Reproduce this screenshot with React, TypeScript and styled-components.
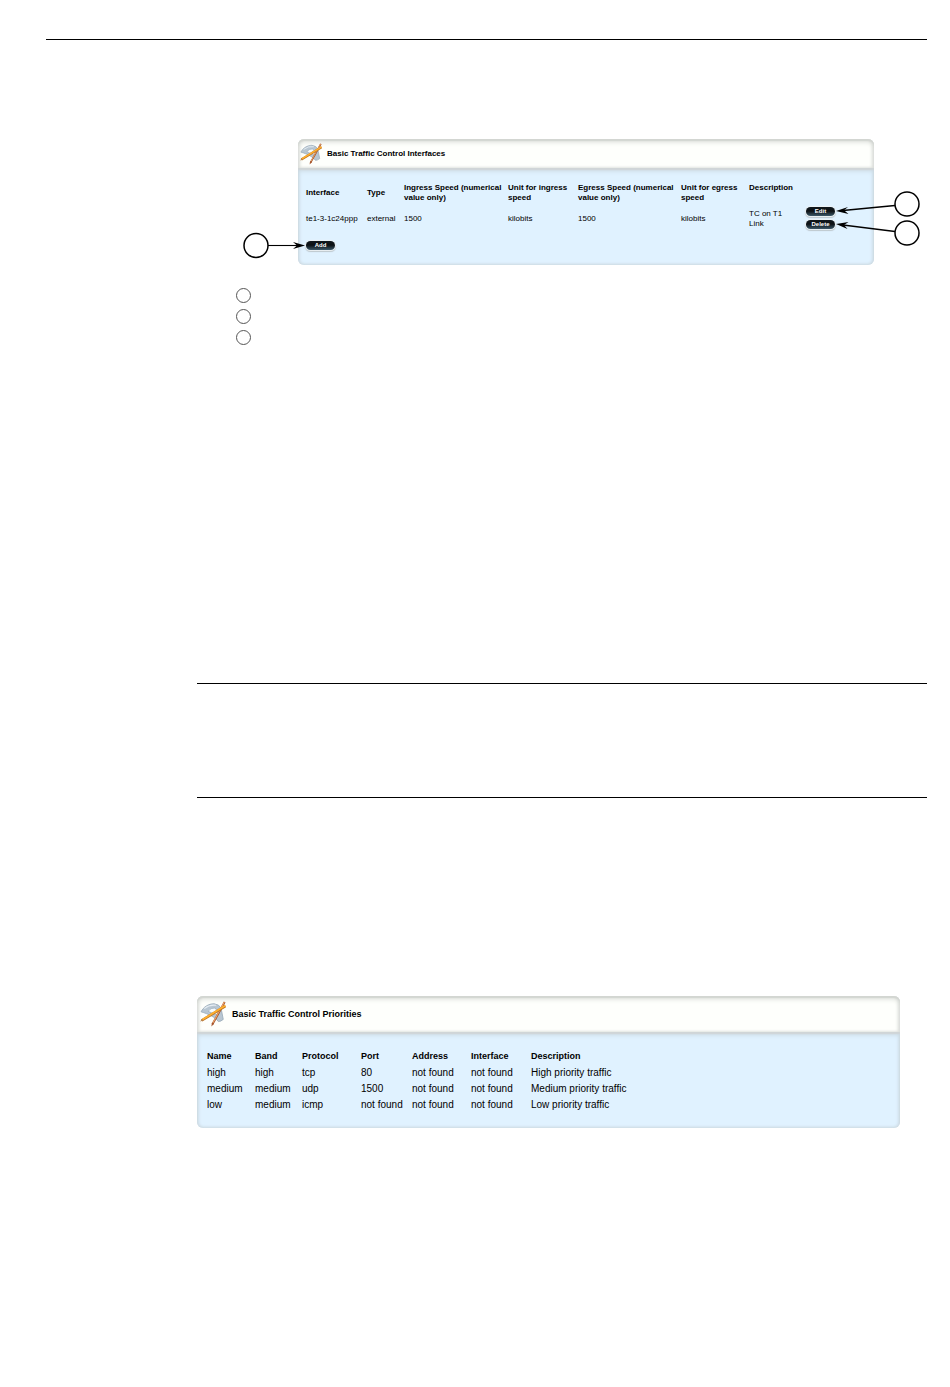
import React from "react";
import styled, { createGlobalStyle } from "styled-components";

const GlobalStyle = createGlobalStyle`
  * { box-sizing: border-box; }
  body {
    margin: 0;
    background: #fff;
    color: #000;
    font-family: "Liberation Sans", Arial, sans-serif;
  }
`;

type Size = "small" | "large";

const Page = styled.main`
  padding: 39px 23px 259px 46px;
`;

const Rule = styled.hr`
  margin: 0;
  border: 0;
  border-top: 1px solid #000;
`;

const Content = styled.section`
  margin-left: 151px;
`;

const Figure = styled.figure`
  margin: 99px 53px 23px 101px;
`;

const KeyList = styled.ol`
  list-style: none;
  margin: 0 0 338px 39px;
  padding: 0;
  display: flex;
  flex-direction: column;
  gap: 6px;
`;

const KeyItem = styled.li`
  width: 15px;
  height: 15px;
  border: 1px solid #555;
  border-radius: 50%;
`;

const Note = styled.div`
  height: 115px;
  margin-bottom: 198px;
  border: solid #000;
  border-width: 1px 0;
`;

const Wide = styled.div`
  margin-right: 27px;
`;

const PanelBox = styled.article`
  border-radius: 6px;
  background: #e0f2ff;
`;

const PanelHeader = styled.header<{ $size: Size }>`
  display: flex;
  align-items: center;
  gap: ${(p) => (p.$size === "small" ? 5 : 6)}px;
  height: ${(p) => (p.$size === "small" ? 29 : 36)}px;
  padding-left: ${(p) => (p.$size === "small" ? 2 : 3)}px;
  border-radius: 6px 6px 0 0;
  background: #fefffc;
  box-shadow: inset 0 2px 1px #d3d6d2, inset 0 3px 5px #d9dcd8, inset 2px 0 3px #e0e3df, inset -2px 0 3px #e0e3df;
`;

const PanelTitle = styled.h2<{ $size: Size }>`
  margin: 0;
  font-size: ${(p) => (p.$size === "small" ? 8 : 9)}px;
  line-height: 12px;
  font-weight: 700;
`;

const PanelBody = styled.div<{ $size: Size }>`
  padding: ${(p) => (p.$size === "small" ? "15px 8px" : "14px 10px 15px")};
  border-radius: 0 0 6px 6px;
  box-shadow: inset 0 2px 1px #d0d5d7, inset 0 3px 5px #cbd9e2, inset 0 0 3px 1px #cdd9e0;
`;

const Table = styled.table<{ $size: Size }>`
  width: 100%;
  table-layout: fixed;
  border-collapse: collapse;
  font-size: ${(p) => (p.$size === "small" ? 8 : 10)}px;
  line-height: 10px;
`;

const HeadCell = styled.th<{ $top?: boolean; $size: Size }>`
  padding: 0;
  font-size: ${(p) => (p.$size === "small" ? 8 : 9)}px;
  text-align: left;
  vertical-align: ${(p) => (p.$top ? "top" : "middle")};
`;

const Cell = styled.td<{ $narrow?: boolean }>`
  padding: 0 ${(p) => (p.$narrow ? 12 : 0)}px 0 0;
  vertical-align: middle;
`;

const Row = styled.tr<{ $height: number }>`
  height: ${(p) => p.$height}px;
`;

const Actions = styled.div`
  display: flex;
  flex-direction: column;
  gap: 4px;
  padding-bottom: 2px;
`;

const AddArea = styled.div`
  padding-top: 6px;
`;

const ButtonSlot = styled.div`
  position: relative;
  width: 29px;
  height: 9px;
`;

const PillButton = styled.button`
  display: block;
  width: 100%;
  height: 9px;
  padding: 0;
  border: 0;
  border-radius: 5px;
  background: linear-gradient(#11181d, #0c1013 45%, #3c5868);
  box-shadow: 0 0 1px 1px #eef3f5, 0 1px 1px 1px #b9c4ca;
  color: #fff;
  font: 700 6px/9px "Liberation Sans", Arial, sans-serif;
  text-align: center;
`;

const Callout = styled.svg<{ $side: "left" | "up" | "down" }>`
  position: absolute;
  top: ${(p) => ({ left: -9, up: -18, down: -1 })[p.$side]}px;
  ${(p) => (p.$side === "left" ? "right: 29px" : "left: 29px")};
  pointer-events: none;
`;

const ToolsIcon = ({ size }: { size: number }) => (
  <svg width={size} height={size} viewBox="0 0 24 24" aria-hidden="true">
    <path
      d="M1 10C3 5.500 8 2.500 13 2.500Q18 3 19.500 7L21.500 17Q19 19 17 19C14 15 8 12 1 10Z"
      fill="#b8c6d2"
      stroke="#94a6b5"
      strokeWidth=".7"
    />
    <path d="M7.500 9.500Q10 6 14 6.500Q16.500 9 17 13Q12 12 7.500 9.500Z" fill="#f7fafb" stroke="#92a5b4" strokeWidth=".6" />
    <path d="M4 7Q9 3 15 4" fill="none" stroke="#e5edf3" strokeWidth="1" />
    <path d="M11.500 21.500L22.800 1" stroke="#9c522d" strokeWidth="1.800" />
    <path d="M12 20L22.500 1" stroke="#f0a367" strokeWidth="1" />
    <path d="M1.500 18L23.500 4.700" stroke="#bd7425" strokeWidth="2.400" />
    <path d="M2 17.400L23.500 4.200" stroke="#ffb02e" strokeWidth="1.600" />
    <path d="M0 19L2 16.500L3.200 18Z" fill="#b78350" />
    <path d="M10.500 23.500L11 20L13 21Z" fill="#a7552d" />
  </svg>
);

const LeftCallout = () => (
  <Callout $side="left" width="64" height="27" viewBox="0 0 64 27" aria-hidden="true">
    <circle cx="14" cy="13.500" r="12" fill="#fff" stroke="#000" strokeWidth="1.500" />
    <path d="M26 13.500H56" stroke="#000" strokeWidth="1.100" />
    <path d="M63 13.500L51 10L55 13.500L51 17Z" />
  </Callout>
);

const UpCallout = () => (
  <Callout $side="up" width="88" height="32" viewBox="0 0 88 32" aria-hidden="true">
    <circle cx="72" cy="15" r="12" fill="#fff" stroke="#000" strokeWidth="1.500" />
    <path d="M60 16.500L8 21.500" stroke="#000" strokeWidth="1.300" />
    <path d="M1 22L13 18L9 21.300L13.500 25Z" />
  </Callout>
);

const DownCallout = () => (
  <Callout $side="down" width="88" height="32" viewBox="0 0 88 32" aria-hidden="true">
    <circle cx="72" cy="14" r="12" fill="#fff" stroke="#000" strokeWidth="1.500" />
    <path d="M60 12.500L8 6" stroke="#000" strokeWidth="1.300" />
    <path d="M1 5L13.500 3L9 6L12.500 10Z" />
  </Callout>
);

const Panel = ({ title, size, children }: { title: string; size: Size; children: React.ReactNode }) => (
  <PanelBox>
    <PanelHeader $size={size}>
      <ToolsIcon size={size === "small" ? 22 : 26} />
      <PanelTitle $size={size}>{title}</PanelTitle>
    </PanelHeader>
    <PanelBody $size={size}>{children}</PanelBody>
  </PanelBox>
);

const Columns = ({ widths }: { widths: number[] }) => (
  <colgroup>
    {widths.map((w, i) => (
      <col key={i} width={w} />
    ))}
    <col />
  </colgroup>
);

const interfaceHeads = [
  "Interface",
  "Type",
  "Ingress Speed (numerical value only)",
  "Unit for ingress speed",
  "Egress Speed (numerical value only)",
  "Unit for egress speed",
];

const priorityHeads = ["Name", "Band", "Protocol", "Port", "Address", "Interface", "Description"];

const priorities = [
  ["high", "high", "tcp", "80", "not found", "not found", "High priority traffic"],
  ["medium", "medium", "udp", "1500", "not found", "not found", "Medium priority traffic"],
  ["low", "medium", "icmp", "not found", "not found", "not found", "Low priority traffic"],
];

export default function App() {
  return (
    <>
      <GlobalStyle />
      <Page>
        <Rule />
        <Content>
          <Figure>
            <Panel title="Basic Traffic Control Interfaces" size="small">
              <Table $size="small">
                <Columns widths={[61, 37, 104, 70, 103, 68, 57]} />
                <thead>
                  <Row $height={20}>
                    {interfaceHeads.map((h) => (
                      <HeadCell key={h} $size="small" scope="col">{h}</HeadCell>
                    ))}
                    <HeadCell $top $size="small" scope="col">Description</HeadCell>
                    <Cell />
                  </Row>
                </thead>
                <tbody>
                  <Row $height={32}>
                    <Cell>te1-3-1c24ppp</Cell>
                    <Cell>external</Cell>
                    <Cell>1500</Cell>
                    <Cell>kilobits</Cell>
                    <Cell>1500</Cell>
                    <Cell>kilobits</Cell>
                    <Cell $narrow>TC on T1 Link</Cell>
                    <Cell>
                      <Actions>
                        <ButtonSlot>
                          <PillButton type="button">Edit</PillButton>
                          <UpCallout />
                        </ButtonSlot>
                        <ButtonSlot>
                          <PillButton type="button">Delete</PillButton>
                          <DownCallout />
                        </ButtonSlot>
                      </Actions>
                    </Cell>
                  </Row>
                </tbody>
              </Table>
              <AddArea>
                <ButtonSlot>
                  <PillButton type="button">Add</PillButton>
                  <LeftCallout />
                </ButtonSlot>
              </AddArea>
            </Panel>
          </Figure>
          <KeyList>
            <KeyItem />
            <KeyItem />
            <KeyItem />
          </KeyList>
          <Note />
          <Wide>
            <Panel title="Basic Traffic Control Priorities" size="large">
              <Table $size="large">
                <Columns widths={[48, 47, 59, 51, 59, 60]} />
                <thead>
                  <Row $height={19}>
                    {priorityHeads.map((h) => (
                      <HeadCell key={h} $size="large" scope="col">{h}</HeadCell>
                    ))}
                  </Row>
                </thead>
                <tbody>
                  {priorities.map((row) => (
                    <Row key={row[0]} $height={16}>
                      {row.map((value, i) => (
                        <Cell key={i}>{value}</Cell>
                      ))}
                    </Row>
                  ))}
                </tbody>
              </Table>
            </Panel>
          </Wide>
        </Content>
      </Page>
    </>
  );
}
